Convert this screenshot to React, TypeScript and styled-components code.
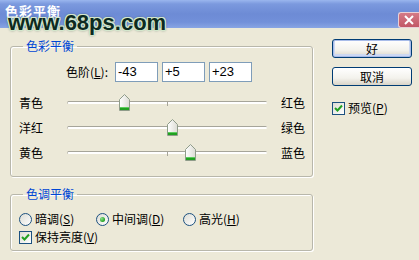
import styled, { createGlobalStyle } from "styled-components";

const GlobalStyle = createGlobalStyle`
  html, body {
    margin: 0;
    padding: 0;
  }
  body {
    background: #ece9d8;
    font-family: "Noto Sans CJK SC", "Liberation Sans", sans-serif;
    font-size: 12px;
    color: #000;
  }
`;

const Window = styled.div`
  width: 419px;
  height: 260px;
  position: relative;
  overflow: hidden;
  background: #ece9d8;
`;

const TitleBar = styled.div`
  height: 28px;
  display: flex;
  justify-content: space-between;
  align-items: flex-start;
  background: linear-gradient(
    #9ab6ee 0px,
    #7b99de 4px,
    #6d8bd5 14px,
    #7290d9 22px,
    #88a5e4 28px
  );
`;

const TitleText = styled.div`
  color: #fff;
  font-size: 13px;
  font-weight: bold;
  line-height: 16px;
  padding: 3px 0 0 5px;
  letter-spacing: 1px;
`;

const CloseButton = styled.div`
  width: 20px;
  height: 14px;
  margin-top: 12px;
  display: flex;
  align-items: center;
  justify-content: center;
  background: linear-gradient(#d47a86, #c25766);
  border: 1px solid #e8d0d6;
  border-right: none;
  border-radius: 3px 0 0 3px;
`;

const Watermark = styled.div`
  position: absolute;
  top: 12px;
  left: 8px;
  font-family: "Liberation Sans", Arial, sans-serif;
  font-weight: bold;
  font-size: 22px;
  line-height: 22px;
  color: #0d2a20;
  text-shadow: 1px 0 #d3e6cc, -1px 0 #d3e6cc, 0 1px #d3e6cc, 0 -1px #d3e6cc,
    1px 1px #d3e6cc, -1px -1px #d3e6cc, 1px -1px #d3e6cc, -1px 1px #d3e6cc,
    0 0 3px #1d3b2c;
  pointer-events: none;
`;

const Body = styled.div`
  display: flex;
  gap: 19px;
  padding: 11px 0 0 10px;
`;

const LeftColumn = styled.div`
  width: 303px;
  display: flex;
  flex-direction: column;
  gap: 10px;
`;

const Group = styled.fieldset<{ $bottom: number }>`
  margin: 0;
  padding: 0 0 ${(p) => p.$bottom}px 8px;
  border: 1px solid #b8b7ab;
  border-radius: 3px;
  box-shadow: inset 1px 1px 0 #fff, 1px 1px 0 #fff;
  min-width: 0;
`;

const Legend = styled.legend`
  margin-left: 4px;
  padding: 0 3px;
  color: #0046d5;
  font-size: 12px;
  line-height: 14px;
`;

const LevelsRow = styled.div`
  display: flex;
  align-items: center;
  margin-top: 9px;
  padding-left: 47px;
  height: 20px;
`;

const LevelsLabel = styled.span`
  width: 49px;
  line-height: 14px;
`;

const NumberBox = styled.div<{ $gap: number }>`
  width: 39px;
  height: 18px;
  margin-left: ${(p) => p.$gap}px;
  border: 1px solid #7f9db9;
  background: #fff;
  font-family: "Liberation Sans", Arial, sans-serif;
  font-size: 13px;
  line-height: 18px;
  padding-left: 2px;
  box-sizing: content-box;
`;

const SliderList = styled.div`
  margin-top: 8px;
  display: flex;
  flex-direction: column;
`;

const SliderRow = styled.div`
  display: flex;
  align-items: center;
  height: 25px;
`;

const SideLabel = styled.span`
  width: 48px;
  line-height: 14px;
`;

const RightLabel = styled.span`
  margin-left: 14px;
  line-height: 14px;
`;

const TrackArea = styled.div`
  position: relative;
  width: 200px;
  height: 25px;
`;

const Groove = styled.div`
  position: absolute;
  left: 0;
  right: 0;
  top: 11px;
  height: 2px;
  border-top: 1px solid #a6a59a;
  border-left: 1px solid #c0bfb4;
  background: #fff;
  border-radius: 2px;
`;

const Tick = styled.div`
  position: absolute;
  left: 100px;
  top: 12px;
  width: 1px;
  height: 4px;
  background: #a6a59a;
`;

const ThumbWrap = styled.div`
  position: absolute;
  top: 4px;
  width: 11px;
  height: 17px;
`;

const Underline = styled.span`
  text-decoration: underline;
`;

const RightColumn = styled.div`
  display: flex;
  flex-direction: column;
  width: 80px;
`;

const DialogButton = styled.div<{ $isDefault?: boolean }>`
  height: 17px;
  margin-bottom: 9px;
  display: flex;
  align-items: center;
  justify-content: center;
  border: 1px solid #003c74;
  border-radius: 3px;
  background: linear-gradient(#ffffff, #f3f2ec 60%, #d9d4c8);
  box-shadow: ${(p) =>
    p.$isDefault ? "inset 0 0 0 1px #a8bce9, inset 0 -1px 0 2px #cdd8f2" : "none"};
  font-size: 12px;
  line-height: 14px;
`;

const CheckRow = styled.label<{ $top?: number }>`
  display: flex;
  align-items: center;
  height: 16px;
  margin-top: ${(p) => p.$top ?? 0}px;
  line-height: 14px;
`;

const Box = styled.span`
  width: 11px;
  height: 11px;
  border: 1px solid #1c5180;
  background: linear-gradient(135deg, #dcdcd4, #ffffff);
  display: flex;
  align-items: center;
  justify-content: center;
  margin-right: 3px;
  flex-shrink: 0;
`;

const RadioRow = styled.div`
  display: flex;
  align-items: center;
  height: 16px;
  margin-top: 10px;
`;

const RadioOption = styled.label<{ $width?: number }>`
  display: flex;
  align-items: center;
  width: ${(p) => (p.$width ? `${p.$width}px` : "auto")};
  line-height: 14px;
`;

const RadioCircle = styled.span`
  width: 11px;
  height: 11px;
  border: 1px solid #1c5180;
  border-radius: 50%;
  background: linear-gradient(135deg, #dcdcd4, #ffffff);
  display: flex;
  align-items: center;
  justify-content: center;
  margin-right: 3px;
  flex-shrink: 0;
`;

const RadioDot = styled.span`
  width: 5px;
  height: 5px;
  border-radius: 50%;
  background: radial-gradient(circle at 35% 35%, #8de08d, #21a121 70%);
`;

const Thumb = () => (
  <svg width="11" height="17" viewBox="0 0 11 17">
    <defs>
      <linearGradient id="thumbFill" x1="0" y1="0" x2="1" y2="0">
        <stop offset="0" stopColor="#ffffff" />
        <stop offset="1" stopColor="#dcdcd4" />
      </linearGradient>
    </defs>
    <path
      d="M5.5 0.5 L10.5 5.5 L10.5 16.5 L0.5 16.5 L0.5 5.5 Z"
      fill="url(#thumbFill)"
      stroke="#8f9c8a"
    />
    <rect x="1" y="13" width="9" height="3" fill="#21a121" />
    <rect x="1" y="13" width="9" height="1" fill="#5ccc5c" />
  </svg>
);

const CheckMark = () => (
  <svg width="9" height="9" viewBox="0 0 9 9">
    <path d="M1 4 L3.5 6.5 L8 1.5" fill="none" stroke="#21a121" strokeWidth="2" />
  </svg>
);

const Checkbox = ({ children, top }: { children: React.ReactNode; top?: number }) => (
  <CheckRow $top={top}>
    <Box>
      <CheckMark />
    </Box>
    <span>{children}</span>
  </CheckRow>
);

const sliders = [
  { left: "青色", right: "红色", value: -43 },
  { left: "洋红", right: "绿色", value: 5 },
  { left: "黄色", right: "蓝色", value: 23 },
];

const App = () => {
  return (
    <Window>
      <GlobalStyle />
      <TitleBar>
        <TitleText>色彩平衡</TitleText>
        <CloseButton>
          <svg width="10" height="10" viewBox="0 0 10 10">
            <path d="M1 1 L9 9 M9 1 L1 9" stroke="#fff" strokeWidth="2" />
          </svg>
        </CloseButton>
      </TitleBar>
      <Watermark>www.68ps.com</Watermark>
      <Body>
        <LeftColumn>
          <Group $bottom={11}>
            <Legend>色彩平衡</Legend>
            <LevelsRow>
              <LevelsLabel>
                色阶(<Underline>L</Underline>):
              </LevelsLabel>
              <NumberBox $gap={0}>-43</NumberBox>
              <NumberBox $gap={4}>+5</NumberBox>
              <NumberBox $gap={4}>+23</NumberBox>
            </LevelsRow>
            <SliderList>
              {sliders.map((s) => (
                <SliderRow key={s.left}>
                  <SideLabel>{s.left}</SideLabel>
                  <TrackArea>
                    <Groove />
                    <Tick />
                    <ThumbWrap style={{ left: `${s.value + 100 - 5}px` }}>
                      <Thumb />
                    </ThumbWrap>
                  </TrackArea>
                  <RightLabel>{s.right}</RightLabel>
                </SliderRow>
              ))}
            </SliderList>
          </Group>
          <Group $bottom={5}>
            <Legend>色调平衡</Legend>
            <RadioRow>
              <RadioOption $width={77}>
                <RadioCircle />
                暗调(<Underline>S</Underline>)
              </RadioOption>
              <RadioOption $width={87}>
                <RadioCircle>
                  <RadioDot />
                </RadioCircle>
                中间调(<Underline>D</Underline>)
              </RadioOption>
              <RadioOption>
                <RadioCircle />
                高光(<Underline>H</Underline>)
              </RadioOption>
            </RadioRow>
            <Checkbox top={2}>
              保持亮度(<Underline>V</Underline>)
            </Checkbox>
          </Group>
        </LeftColumn>
        <RightColumn>
          <DialogButton $isDefault>好</DialogButton>
          <DialogButton>取消</DialogButton>
          <Checkbox top={5}>
            预览(<Underline>P</Underline>)
          </Checkbox>
        </RightColumn>
      </Body>
    </Window>
  );
};

export default App;
